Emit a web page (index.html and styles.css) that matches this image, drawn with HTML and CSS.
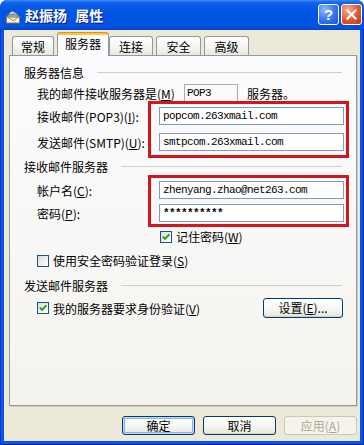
FILE: index.html
```html
<!DOCTYPE html>
<html lang="zh-CN">
<head>
<meta charset="utf-8">
<title>赵振扬 属性</title>
<link rel="stylesheet" href="styles.css">
</head>
<body>
<div class="window">
  <div class="titlebar">
    <svg class="app-icon" viewBox="0 0 16 16" width="16" height="16">
      <defs>
        <linearGradient id="dome" x1="0" y1="0" x2="0" y2="1">
          <stop offset="0" stop-color="#E4E8EE"/>
          <stop offset="1" stop-color="#7D8794"/>
        </linearGradient>
      </defs>
      <path d="M3 8 C3 2.6 13 2.6 13 8 Z" fill="url(#dome)" stroke="#4F5966" stroke-width="0.8"/>
      <path d="M5.2 5.2 C6 4.2 7.5 3.9 8.6 4.1" stroke="#fff" stroke-width="1" fill="none"/>
      <rect x="1.5" y="8.5" width="13" height="6.5" fill="#FFF5D2" stroke="#8E7B45" stroke-width="0.9"/>
      <path d="M1.5 8.5 L8 12.6 L14.5 8.5" stroke="#8E7B45" stroke-width="0.9" fill="none"/>
      <ellipse cx="8" cy="8" rx="6.3" ry="1.3" fill="#A7AFBA" stroke="#4F5966" stroke-width="0.6"/>
    </svg>
    <span class="title">赵振扬 属性</span>
    <div class="tb-buttons">
      <div class="tb-btn tb-help">?</div>
      <div class="tb-btn tb-close">
        <svg viewBox="0 0 19 19" width="19" height="19"><path d="M5.5 5.5 L13.5 13.5 M13.5 5.5 L5.5 13.5" stroke="#fff" stroke-width="2.2" stroke-linecap="square"/></svg>
      </div>
    </div>
  </div>
  <div class="frame">
    <div class="client">
      <div class="tabs">
        <div class="tab tab-general">常规</div>
        <div class="tab tab-server active">服务器</div>
        <div class="tab tab-connect">连接</div>
        <div class="tab tab-security">安全</div>
        <div class="tab tab-advanced">高级</div>
      </div>
      <div class="panel">
        <div class="group-head"><span>服务器信息</span><i class="rule"></i></div>
        <div class="type-row">
          <span class="type-label">我的邮件接收服务器是(<u>M</u>)</span>
          <span class="type-box">POP3</span>
          <span class="type-suffix">服务器。</span>
        </div>
        <div class="fields fields-server">
          <div class="field"><span class="field-label">接收邮件(POP3)(<u>I</u>):</span><span class="input">popcom.263xmail.com</span></div>
          <div class="field"><span class="field-label">发送邮件(SMTP)(<u>U</u>):</span><span class="input">smtpcom.263xmail.com</span></div>
          <div class="marker"></div>
        </div>

        <div class="group-head head-recv"><span>接收邮件服务器</span><i class="rule"></i></div>
        <div class="fields fields-account">
          <div class="field"><span class="field-label">帐户名(<u>C</u>):</span><span class="input">zhenyang.zhao@net263.com</span></div>
          <div class="field"><span class="field-label">密码(<u>P</u>):</span><span class="input input-pass">**********</span></div>
          <div class="marker"></div>
        </div>
        <div class="check-row remember">
          <span class="checkbox"><svg viewBox="0 0 10 10" width="10" height="10"><path d="M1.8 4.6 L4 6.9 L8.4 2.4" stroke="#21A121" stroke-width="1.9" fill="none"/></svg></span>
          <span>记住密码(<u>W</u>)</span>
        </div>
        <div class="check-row spa">
          <span class="checkbox"></span>
          <span>使用安全密码验证登录(<u>S</u>)</span>
        </div>

        <div class="group-head head-send"><span>发送邮件服务器</span><i class="rule"></i></div>
        <div class="auth-row">
          <div class="check-row">
            <span class="checkbox"><svg viewBox="0 0 10 10" width="10" height="10"><path d="M1.8 4.6 L4 6.9 L8.4 2.4" stroke="#21A121" stroke-width="1.9" fill="none"/></svg></span>
            <span>我的服务器要求身份验证(<u>V</u>)</span>
          </div>
          <div class="btn btn-settings">设置(<u>E</u>)...</div>
        </div>
      </div>
      <div class="actions">
        <div class="btn btn-default">确定</div>
        <div class="btn">取消</div>
        <div class="btn btn-disabled">应用(<u>A</u>)</div>
      </div>
    </div>
  </div>
</div>
</body>
</html>
```

FILE: styles.css
```css
* { box-sizing: border-box; }
html, body { margin: 0; padding: 0; background: #ffffff; }
body {
  font-family: "Noto Sans CJK SC", "Noto Sans", sans-serif;
  font-size: 12px;
  color: #000;
}
u { text-decoration: underline; text-underline-offset: 1px; }

.window {
  width: 364px;
  height: 445px;
  display: flex;
  flex-direction: column;
  border-radius: 7px 7px 0 0;
  overflow: hidden;
  background: #0055E5;
}

.titlebar {
  height: 30px;
  flex: none;
  display: flex;
  align-items: center;
  padding: 0 2px 0 5px;
  background: linear-gradient(#3D8EF6 0px, #1B68EC 2px, #0A5DE8 5px, #0055E5 12px, #0054E3 22px, #0050DC 27px, #0044CF 30px);
}
.app-icon { flex: none; margin-top: 1px; }
.title {
  flex: 1;
  margin-left: 4px;
  color: #fff;
  font-weight: 700;
  font-size: 14px;
  word-spacing: 5px;
  text-shadow: 1px 1px 0 #0A1E8C;
}
.tb-buttons { display: flex; gap: 2px; margin-top: -1px; }
.tb-btn {
  width: 21px;
  height: 21px;
  border: 1px solid #fff;
  border-radius: 3px;
  display: flex;
  align-items: center;
  justify-content: center;
  color: #fff;
}
.tb-help {
  background: radial-gradient(circle at 30% 25%, #8CBBFF 0%, #3B78EE 50%, #1E50D2 100%);
  font-family: "Liberation Sans", sans-serif;
  font-weight: 700;
  font-size: 15px;
  line-height: 1;
}
.tb-close {
  background: radial-gradient(circle at 30% 25%, #F6AE8E 0%, #E2562D 55%, #C23A13 100%);
}

.frame {
  flex: 1;
  padding: 0 4px 4px;
  background: #0856E2;
  box-shadow: inset 1px 0 #0831D9, inset -1px 0 #0020A8, inset 0 -1px #0020A8;
}
.client {
  height: 411px;
  background: #ECE9D8;
  padding: 1px 3px 0 5px;
  display: flex;
  flex-direction: column;
}

.tabs {
  height: 24px;
  flex: none;
  display: flex;
  align-items: flex-end;
  padding-left: 3px;
}
.tab {
  height: 19px;
  margin-right: 3px;
  border: 1px solid #919B9C;
  border-bottom: none;
  border-radius: 3px 3px 0 0;
  background: linear-gradient(#FFFFFF, #F4F4F0 60%, #E8E7E0);
  display: flex;
  align-items: center;
  justify-content: center;
}
.tab-general { width: 42px; }
.tab-server { width: 52px; }
.tab-connect { width: 44px; }
.tab-security { width: 45px; }
.tab-advanced { width: 45px; }
.tab.active {
  height: 24px;
  margin-right: 0;
  margin-bottom: -1px;
  padding-bottom: 2px;
  position: relative;
  z-index: 1;
  border-top: none;
  border-color: #919B9C;
  background: linear-gradient(#E68B2C 0px, #E68B2C 1px, #FFC73C 1px, #FFC73C 3px, #FCFCFE 3px);
}

.panel {
  height: 351px;
  flex: none;
  border: 1px solid #919B9C;
  background: linear-gradient(#FCFCFE, #F4F3EE);
  box-shadow: 1px 1px 0 #D2CFC0;
  padding: 10px 13px 0 14px;
}

.group-head {
  display: flex;
  align-items: center;
  height: 13px;
  line-height: 13px;
}
.group-head .rule {
  flex: 1;
  height: 1px;
  background: #D0D0BF;
  margin-left: 13px;
  margin-right: 1px;
}
.head-recv { margin-top: 9px; }
.head-send { margin-top: 12px; }

.type-row {
  display: flex;
  align-items: center;
  height: 19px;
  margin-top: 5px;
  padding-left: 13px;
}
.type-label { width: 147px; flex: none; }
.type-box {
  width: 54px;
  height: 19px;
  flex: none;
  border: 1px solid #A5ACB2;
  padding-left: 2px;
  font-family: "Liberation Mono", monospace;
  font-size: 11px;
  letter-spacing: -0.6px;
  line-height: 17px;
}
.type-suffix { margin-left: 9px; }

.fields {
  position: relative;
  display: flex;
  flex-direction: column;
}
.fields-server { margin-top: 4px; gap: 8px; }
.fields-account { margin-top: 8px; gap: 5px; }
.field {
  display: grid;
  grid-template-columns: 122px 185px;
  align-items: center;
  height: 18px;
  padding-left: 13px;
}
.field-label { white-space: nowrap; }
.input {
  height: 18px;
  border: 1px solid #7F9DB9;
  background: #fff;
  padding-left: 3px;
  font-family: "Liberation Mono", monospace;
  font-size: 11px;
  letter-spacing: -0.6px;
  line-height: 16px;
  white-space: nowrap;
  overflow: hidden;
}
.input-pass { font-weight: 700; }
.marker {
  position: absolute;
  left: 124px;
  top: -6px;
  width: 201px;
  border: 3px solid #D5141C;
  pointer-events: none;
}
.fields-server .marker { height: 57px; }
.fields-account .marker { height: 52px; }

.check-row {
  display: flex;
  align-items: center;
  height: 13px;
}
.remember { margin-top: 8px; padding-left: 136px; }
.spa { margin-top: 11px; padding-left: 13px; }
.checkbox {
  width: 12px;
  height: 12px;
  flex: none;
  margin-right: 4px;
  border: 1px solid #1C5180;
  background: linear-gradient(135deg, #DCDCD7, #FFFFFF);
  display: flex;
  align-items: center;
  justify-content: center;
}
.checkbox svg { display: block; }

.auth-row {
  display: flex;
  align-items: center;
  justify-content: space-between;
  height: 20px;
  margin-top: 6px;
  padding-left: 13px;
}

.btn {
  width: 73px;
  height: 19px;
  border: 1px solid #003C74;
  border-radius: 3px;
  background: linear-gradient(#FFFFFF, #F5F5F1 60%, #E6E3D8);
  box-shadow: inset 0 -1px 0 #D6D0C5;
  display: flex;
  align-items: center;
  justify-content: center;
  line-height: 1;
  white-space: nowrap;
}
.btn-settings { width: 80px; height: 20px; }
.btn-default {
  box-shadow: inset 0 0 0 1px #C2D8FA, inset 0 0 0 2px #8DB2EE;
}
.btn-disabled {
  border-color: #C9C7BA;
  background: #F5F4EA;
  box-shadow: none;
  color: #ACA899;
}

.actions {
  display: flex;
  justify-content: flex-end;
  gap: 8px;
  margin-top: 10px;
}
```
